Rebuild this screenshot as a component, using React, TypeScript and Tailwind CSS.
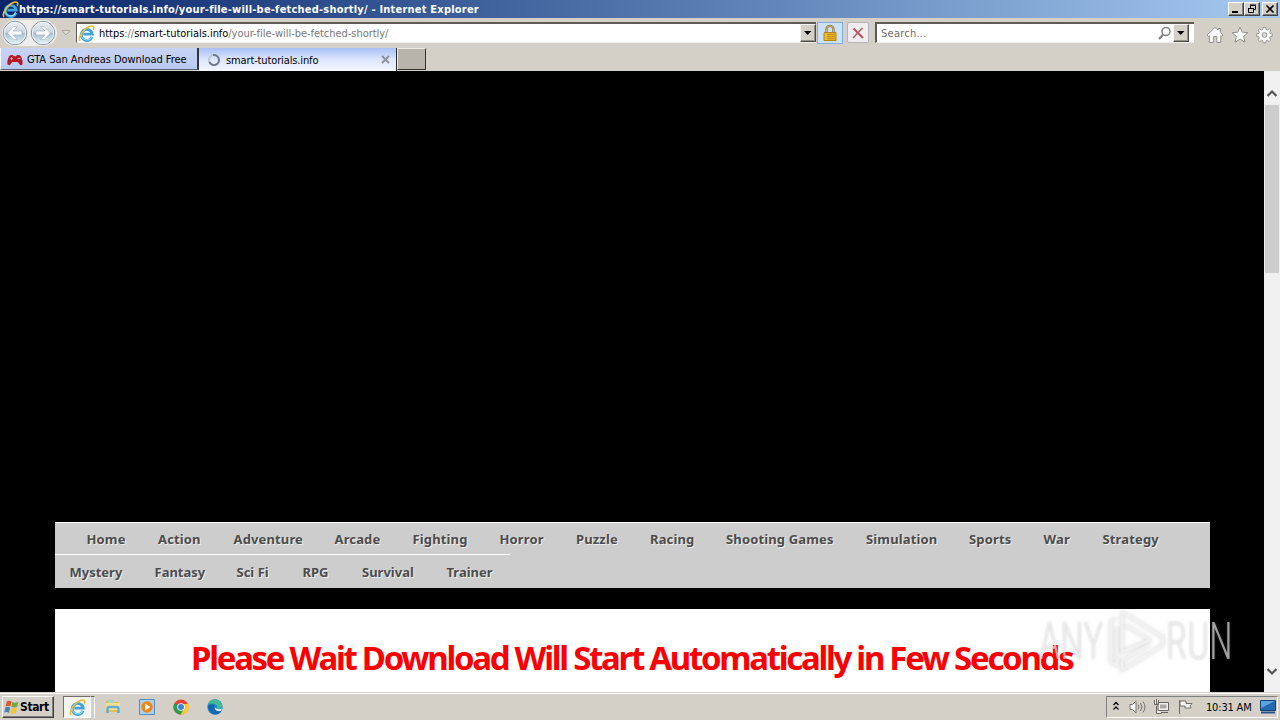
import type { ReactNode } from "react";

const rowOne = [
  { label: "Home", w: "w-[71.5px]" },
  { label: "Action", w: "w-[75.5px]" },
  { label: "Adventure", w: "w-[101px]" },
  { label: "Arcade", w: "w-[78px]" },
  { label: "Fighting", w: "w-[87px]" },
  { label: "Horror", w: "w-[76.5px]" },
  { label: "Puzzle", w: "w-[74px]" },
  { label: "Racing", w: "w-[76px]" },
  { label: "Shooting Games", w: "w-[140px]" },
  { label: "Simulation", w: "w-[103px]" },
  { label: "Sports", w: "w-[74.5px]" },
  { label: "War", w: "w-[59px]" },
  { label: "Strategy", w: "w-[60px]" },
];

const rowTwo = [
  { label: "Mystery", w: "w-[85px]" },
  { label: "Fantasy", w: "w-[82px]" },
  { label: "Sci Fi", w: "w-[66px]" },
  { label: "RPG", w: "w-[59.5px]" },
  { label: "Survival", w: "w-[84.5px]" },
  { label: "Trainer", w: "w-[48px]" },
];

function IeIcon({ size }: { size: number }) {
  return (
    <svg width={size} height={size} viewBox="0 0 16 16" className="shrink-0">
      <path
        d="M13.2 11A5.2 5.2 0 1 1 13.4 8.6H5"
        fill="none"
        stroke="#3fa3dc"
        strokeWidth="2.7"
      />
      <path
        d="M12.9 10.6A5 5 0 0 1 3.2 9.6"
        fill="none"
        stroke="#8fdcf6"
        strokeWidth="1"
      />
      <path
        d="M2.2 14.9C-1.6 13 6.5 1 13 .9c2.1 0 2.2 1.8 1.3 3.6"
        fill="none"
        stroke="#edc02f"
        strokeWidth="1.5"
      />
    </svg>
  );
}

function NavArrow({ flip }: { flip?: boolean }) {
  return (
    <svg
      width="26"
      height="26"
      viewBox="0 0 26 26"
      className={flip ? "-scale-x-100" : ""}
    >
      <defs>
        <linearGradient id="navRound" x2="0" y2="1">
          <stop stopColor="#eef1f4" />
          <stop offset=".45" stopColor="#ccd6df" />
          <stop offset=".52" stopColor="#a9bfd1" />
          <stop offset="1" stopColor="#e4f7fc" />
        </linearGradient>
      </defs>
      <circle cx="13" cy="13" r="11.7" fill="url(#navRound)" stroke="#84909c" />
      <circle cx="13" cy="13" r="10.7" fill="none" stroke="#eff5f9" />
      <path
        d="M5.5 13l6.3-6.4h3.6l-4.4 4.5H20v3.8h-9l4.4 4.5h-3.6z"
        fill="#fff"
        stroke="#9badbc"
        strokeWidth=".6"
      />
    </svg>
  );
}

function DropButton() {
  return (
    <div className="flex h-[18px] w-4 shrink-0 items-center justify-center border border-t-[#f5f3f0] border-r-[#4d4944] border-b-[#4d4944] border-l-[#f5f3f0] bg-[#d4d0c8] shadow-[inset_-1px_-1px_0_#97928c]">
      <svg width="8" height="4" viewBox="0 0 8 4">
        <path d="M0 0h7.4L3.7 4z" />
      </svg>
    </div>
  );
}

function WindowButton({ children }: { children: ReactNode }) {
  return (
    <div className="h-[14px] w-4 border border-t-white border-r-[#404040] border-b-[#404040] border-l-white bg-[#d4d0c8] shadow-[inset_-1px_-1px_0_#808080]">
      <svg width="14" height="12" viewBox="0 0 14 12" fill="none" stroke="#000">
        {children}
      </svg>
    </div>
  );
}

function TitleBar() {
  return (
    <div className="flex h-[18px] items-center bg-gradient-to-r from-[#0a246a] to-[#a6caf0] pr-[2px] pl-[2px]">
      <IeIcon size={17} />
      <span className="flex-1 pt-px text-[11px] leading-[17px] font-bold tracking-[0.21px] whitespace-nowrap text-white">
        https://smart-tutorials.info/your-file-will-be-fetched-shortly/ - Internet Explorer
      </span>
      <div className="flex">
        <WindowButton>
          <path d="M3 9h6" strokeWidth="2" />
        </WindowButton>
        <WindowButton>
          <path d="M5.5 5V2.5h5v4H8M5 2h6M3.5 6v3.5h5V6M3 5.5h6" />
        </WindowButton>
        <div className="w-[2px]" />
        <WindowButton>
          <path d="M3.5 2.5l7 7M10.5 2.5l-7 7" strokeWidth="1.6" />
        </WindowButton>
      </div>
    </div>
  );
}

function Toolbar() {
  return (
    <div className="flex h-[29px] items-center bg-[#d4d0c8] pl-[2px] text-[11px]">
      <div className="flex h-[26px] w-[55px] gap-[2px] rounded-full bg-[#eeedeb]">
        <NavArrow />
        <NavArrow flip />
      </div>
      <svg width="10" height="6" viewBox="0 0 10 6" className="ml-[4px]">
        <path d="M1 .5h8L5 5z" fill="#e0ddd8" stroke="#aaa69f" />
      </svg>
      <div className="ml-[5px] flex h-[21px] w-[740px] items-center border-t-2 border-b border-l border-[#625b55] border-b-[#f0eeeb] bg-white pl-[1px]">
        <IeIcon size={17} />
        <span className="ml-[4px] flex-1 pt-[3px] tracking-[-0.04px] whitespace-nowrap text-[#777]">
          <span className="text-black">https</span>://
          <span className="text-black">smart-tutorials.info</span>
          /your-file-will-be-fetched-shortly/
        </span>
        <DropButton />
      </div>
      <div className="ml-[1px] flex h-[22px] w-[26px] items-center justify-center border border-[#81aee2] bg-[#cce2fa]">
        <svg width="16" height="18" viewBox="0 0 16 18">
          <path d="M4.5 9V5.3a3.5 3.5 0 0 1 7 0V9" fill="none" stroke="#8f7335" strokeWidth="2.3" />
          <path d="M4.5 9V5.3a3.5 3.5 0 0 1 7 0V9" fill="none" stroke="#e0c683" strokeWidth=".8" />
          <path d="M2 8.5h12v8H2z" fill="#e8b324" stroke="#b4811b" />
          <path d="M3 10.5h10M3 12.5h10M3 14.5h10" stroke="#b9841b" strokeWidth=".8" />
          <path d="M4 9v7" stroke="#f9da65" />
        </svg>
      </div>
      <div className="ml-[4px] flex h-[21px] w-[22px] items-center justify-center rounded-[2px] border border-[#b7b3b6] bg-[#f0edf0]">
        <svg width="12" height="12" viewBox="0 0 12 12">
          <path d="M1.5 1.5L11 11" stroke="#bb505a" strokeWidth="2" />
          <path d="M10.5 1L1 11" stroke="#a8626c" strokeWidth="1.6" />
        </svg>
      </div>
      <div className="ml-[6px] flex h-[21px] w-[319px] items-center border-t-2 border-b border-l-2 border-[#625b55] border-b-[#f0eeeb] bg-white pr-[5px]">
        <span className="ml-[4px] flex-1 pt-[3px] tracking-[0.25px] text-[#6c6c6c]">Search...</span>
        <svg width="15" height="15" viewBox="0 0 15 15" className="mr-[1px]">
          <circle cx="9" cy="5.5" r="4" fill="none" stroke="#858585" strokeWidth="1.6" />
          <path d="M6.2 8.5L2 13" stroke="#858585" strokeWidth="2.2" />
        </svg>
        <DropButton />
      </div>
      <div className="mt-[4px] ml-[12px] flex gap-[7px]">
        <svg width="18" height="18" viewBox="0 0 18 18" fill="#fff" stroke="#96918b">
          <path d="M1 9l8-7.5L12 4V2.5h2.5v4L17 9l-1.4 1.4-.8-.7v6.8h-4v-6H7.4v6h-4V9.7l-1 .8z" />
        </svg>
        <svg width="18" height="18" viewBox="0 0 18 18" fill="#fff" stroke="#96918b">
          <path d="M9 1l2.2 5.2 5.8.5-4.4 3.8 1.4 5.8L9 13.2l-5 3.1 1.4-5.8L1 6.7l5.8-.5z" />
        </svg>
        <svg width="17" height="18" viewBox="0 0 18 18" fill="#fff" stroke="#96918b">
          <path d="M7.6 1h2.8l.4 2.3 1.3.5L14 2.4 15.8 4l-1.4 2 .5 1.3 2.3.4v2.7l-2.3.4-.5 1.3 1.3 2-1.9 1.8-1.8-1.4-1.3.5-.4 2.3H7.6L7.2 15l-1.3-.5L4 15.9l-1.8-1.8 1.4-2-.5-1.3-2.3-.4V7.7l2.3-.4L3.6 6 2.2 4 4 2.4l1.9 1.4 1.3-.5z" />
          <circle cx="9" cy="9" r="2.6" fill="#ddd9d4" />
        </svg>
      </div>
    </div>
  );
}

function Tabs() {
  return (
    <div className="flex h-6 bg-[#d4d0c8] pt-px text-[11px]">
      <div className="flex h-[22px] w-[199px] items-center border-r-2 border-b border-l border-r-[#34363c] border-b-[#596377] border-l-white bg-gradient-to-b from-[#c8d4f5] to-[#b8c9f1] pl-[6px]">
        <svg width="16" height="12" viewBox="0 0 16 12" className="mt-[2px] mr-[4px]">
          <path
            d="M3.2 1.2L6 1l1 1.2h2L10 1l2.8.2C15 3 16 8 15.5 10c-.5 1.7-2.3 1.4-3 .2L10.8 8H5.2l-1.7 2.2c-.7 1.2-2.5 1.5-3-.2C0 8 1 3 3.2 1.2z"
            fill="#b51925"
          />
          <path d="M3 4.7h3M4.5 3.2v3M10.5 4.5h3" stroke="#e9a0a3" />
        </svg>
        <span className="pt-[4px] tracking-[-0.05px] whitespace-nowrap text-black">
          GTA San Andreas Download Free
        </span>
      </div>
      <div className="flex h-[23px] w-[198px] items-center border-r border-r-[#282828] bg-gradient-to-b from-[#a9c0f5] via-[#dce6fd] to-[#f2f6ff] pr-[6px] pl-[8px]">
        <svg width="14" height="14" viewBox="0 0 14 14">
          <circle cx="7" cy="7" r="5" fill="none" stroke="#bcc5d6" strokeWidth="2" />
          <path d="M6 2.1A5 5 0 1 1 2.4 9" fill="none" stroke="#707b90" strokeWidth="2" />
        </svg>
        <span className="ml-[5px] flex-1 pt-[3px] tracking-[-0.13px] text-black">
          smart-tutorials.info
        </span>
        <svg width="9" height="9" viewBox="0 0 9 9">
          <path d="M1 1l7 7M8 1L1 8" stroke="#8c929f" strokeWidth="2" />
        </svg>
      </div>
      <div className="h-[22px] w-[29px] border border-t-[#eeeae4] border-r-[#34312e] border-b-[#34312e] border-l-[#eeeae4] bg-[#b9b4ab]" />
    </div>
  );
}

function Watermark() {
  return (
    <div className="absolute top-[538px] left-[1039px] flex h-[64px] w-[196px] items-center font-['Roboto',sans-serif] text-[52px] leading-none font-light text-[#f4f4f4]/60 [text-shadow:0_0_3px_#88888866]">
      <span className="w-[69px] origin-left scale-x-[.74] pt-[2px] whitespace-nowrap">ANY</span>
      <svg width="58" height="64" viewBox="0 0 58 64" fill="none" className="shrink-0 drop-shadow-[0_0_2px_#88888866]">
        <path
          d="M14 3l41 25v8L14 61v-9l27-16M14 3v40l28-12L17 16M8 9L3 12v41l6 3V18"
          stroke="#f2f2f2"
          strokeOpacity=".85"
          strokeWidth="3"
        />
      </svg>
      <span className="w-[68px] origin-left scale-x-[.74] pt-[2px] whitespace-nowrap">RUN</span>
    </div>
  );
}

function Page() {
  return (
    <div className="relative flex h-[621px] bg-black">
      <main className="w-[1264px] overflow-hidden pt-[451px] pl-[55px] font-['Noto_Sans','Open_Sans',sans-serif]">
        <nav className="h-[66px] w-[1155px] border-t border-white bg-[#cdcdcd] text-[13px] font-bold text-[#4c4c4c] [text-shadow:1px_1px_0_#eeeeee]">
          <div className="flex h-[31px] items-center pt-[2px] pl-[31.5px] tracking-[0.14px]">
            {rowOne.map((item) => (
              <a key={item.label} className={`shrink-0 whitespace-nowrap ${item.w}`}>
                {item.label}
              </a>
            ))}
          </div>
          <div className="flex h-[34px] w-[455px] items-center border-t border-white pt-[2px] pl-[14.5px]">
            {rowTwo.map((item) => (
              <a key={item.label} className={`shrink-0 whitespace-nowrap ${item.w}`}>
                {item.label}
              </a>
            ))}
          </div>
        </nav>
        <section className="mt-[21px] h-[83px] w-[1155px] bg-white pt-[26px]">
          <h1 className="ml-[136px] text-[33px] leading-[46px] font-bold tracking-[-2.3px] whitespace-nowrap text-[#fb0000]">
            Please Wait Download Will Start Automatically in Few Seconds
          </h1>
        </section>
      </main>
      <aside className="flex w-4 flex-col items-center bg-[#f0f0f0] pt-[17px] pb-[15px]">
        <svg width="12" height="10" viewBox="0 0 12 10" fill="none">
          <path d="M1.5 8L6 3.5 10.5 8" stroke="#555" strokeWidth="2.2" />
        </svg>
        <div className="mt-[7px] h-[168px] w-[14px] bg-[#cdcdcd]" />
        <svg width="12" height="10" viewBox="0 0 12 10" fill="none" className="mt-auto">
          <path d="M1.5 2L6 6.5 10.5 2" stroke="#555" strokeWidth="2.2" />
        </svg>
      </aside>
      <Watermark />
    </div>
  );
}

function Taskbar() {
  return (
    <footer className="flex h-7 items-center border-t border-[#d4d0c8] bg-[#d4d0c8] text-[11px] shadow-[inset_0_1px_0_white]">
      <div className="mt-px ml-[2px] flex h-[22px] w-[52px] items-center border border-t-white border-r-[#404040] border-b-[#404040] border-l-white pl-[1px] font-bold text-black shadow-[inset_-1px_-1px_0_#808080]">
        <svg width="15" height="15" viewBox="0 0 16 16" className="shrink-0">
          <path d="M3 1.5c2-1.2 3.5-.8 5 .1L6.8 7C5.2 6 3.7 6 1.8 7z" fill="#e65329" />
          <path d="M9 2c1.8 1.2 3.8 1 6.4-.2L14.2 7c-2 1.2-4 1.2-6.4.1z" fill="#71a943" />
          <path d="M1.5 8c1.8-1 3.4-1 5 0l-1.2 5.5c-1.5-1-3.3-1-5 0z" fill="#4383c4" />
          <path d="M7.5 8.3c1.8 1.1 4 1 6.4-.1l-1.2 5.5c-2 1.2-4 1.2-6.4.1z" fill="#f1c438" />
        </svg>
        <span className="ml-px text-[12px] tracking-[-0.4px]">Start</span>
      </div>
      <div className="mt-px ml-[9px] flex h-[22px] w-[28px] items-center justify-center border border-t-[#707070] border-r-white border-b-white border-l-[#707070] bg-[#f4f3f1]">
        <IeIcon size={17} />
      </div>
      <div className="mt-px h-[22px] w-[4px] border-t border-r border-t-[#606060] border-r-white" />
      <div className="ml-[10px] flex items-center gap-[18px]">
        <svg width="16" height="17" viewBox="0 0 16 17">
          <path d="M1 3h5l1 1h7v10H1z" fill="#e5bd52" />
          <path d="M3 1.5h6v5H3z" fill="#a6d5c0" />
          <path d="M1 5h14v7H1z" fill="#f5df91" />
          <path d="M2.5 15V10.5q0-1.5 1.5-1.5h8q1.5 0 1.5 1.5V15" fill="none" stroke="#63acd6" strokeWidth="2.4" />
        </svg>
        <svg width="16" height="16" viewBox="0 0 16 16">
          <path d="M.5.5h15v15H.5z" fill="#acd0e9" stroke="#528fc2" />
          <circle cx="8" cy="8" r="5.7" fill="#ef8618" />
          <path d="M6.2 4.5v7l5-3.5z" fill="#fff" />
        </svg>
        <svg width="16" height="16" viewBox="0 0 16 16">
          <circle cx="8" cy="8" r="7.6" fill="#e64536" />
          <path d="M1.4 4.2A7.6 7.6 0 0 0 7.7 15.6L11.3 10 8 8z" fill="#2d9c51" />
          <path d="M15.2 5A7.6 7.6 0 0 1 7.7 15.6L11.4 9 8 5z" fill="#f8cb31" />
          <circle cx="8" cy="8" r="3.8" fill="#fff" />
          <circle cx="8" cy="8" r="3" fill="#3f7fe5" />
        </svg>
        <svg width="16" height="16" viewBox="0 0 16 16">
          <circle cx="8" cy="8" r="7.7" fill="#1688cc" />
          <path d="M.6 6C2-.5 11-1 14 3.7c3 4.6-.5 7-5 6.2 2-1.8 1.6-4.1-1.6-5C4.5 4.1 2 5 .6 6z" fill="#45ba93" />
          <path d="M1 7c4-3 7-1.3 6.6 1-.3 3.5 3.4 4.5 7 3.5A7.6 7.6 0 0 1 6 15C3 13 1 10 1 7z" fill="#1766ac" />
          <path d="M8 7.8c0 2 3 3.3 6.8 1.8l-.6 2.2C10 13 7 10.8 8 7.8z" fill="#e4eff1" />
        </svg>
      </div>
      <div className="mt-px mr-[2px] ml-auto flex h-[22px] w-[172px] items-center border border-t-[#808080] border-r-white border-b-white border-l-[#808080] pl-[5px] text-black">
        <svg width="8" height="10" viewBox="0 0 8 10" fill="none" stroke="#000" strokeWidth="1.3" className="mb-[3px]">
          <path d="M1.5 4L4 1.5 6.5 4M1.5 8.5L4 6l2.5 2.5" />
        </svg>
        <svg width="17" height="16" viewBox="0 0 17 16" fill="#f9f9f9" stroke="#77736e" className="ml-[9px]">
          <path d="M1 5.5h2.5L7 2v12l-3.5-3.5H1z" />
          <path d="M9 5.5q2 2.5 0 5M11.5 4q3 4 0 8M14 2.5q4 5.5 0 11" fill="none" />
        </svg>
        <svg width="17" height="16" viewBox="0 0 17 16" fill="#f1f0ed" stroke="#67635e" className="ml-[7px]">
          <path d="M5 3.5h10.5v8H5zM8 13.5h7M3.5 7v7.5h5M1.5 1v4.5h4V1M3.5 0v5" />
          <path d="M7 5.5h6.5v4H7z" fill="#aaa7a2" stroke="none" />
        </svg>
        <svg width="17" height="16" viewBox="0 0 17 16" fill="#f8f7f5" stroke="#706c66" className="ml-[7px]">
          <path d="M2.5 15V1M3 2h6v2.5h6L13 7l1 2H8V7H3z" />
        </svg>
        <span className="ml-[12px] w-[54px] pt-[2px] tracking-[-0.18px] whitespace-nowrap">10:31 AM</span>
        <svg width="16" height="14" viewBox="0 0 16 14">
          <path d="M.5.5h15v10H.5z" fill="#2468b0" stroke="#183f76" />
          <path d="M1 1h14L1 8z" fill="#5ba5dd" />
          <path d="M1 12.5h14" stroke="#24548b" strokeWidth="2" />
        </svg>
      </div>
    </footer>
  );
}

export default function App() {
  return (
    <div className="h-[720px] w-[1280px] overflow-hidden bg-[#d4d0c8] font-['DejaVu_Sans_Condensed','DejaVu_Sans',sans-serif] [font-stretch:condensed]">
      <TitleBar />
      <Toolbar />
      <Tabs />
      <Page />
      <Taskbar />
    </div>
  );
}
